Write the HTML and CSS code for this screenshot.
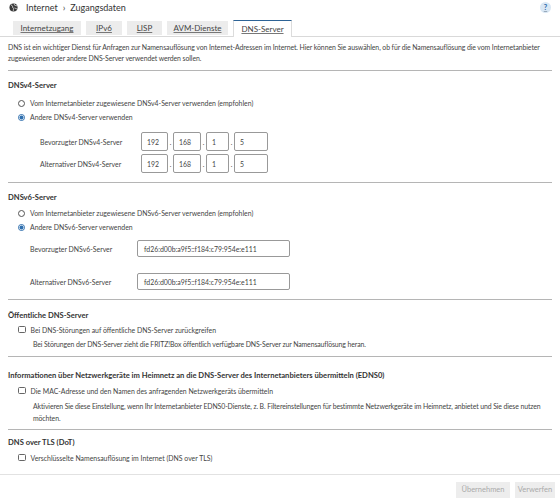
FILE: index.html
```html
<!DOCTYPE html>
<html lang="de">
<head>
<meta charset="utf-8">
<title>Zugangsdaten</title>
<link rel="stylesheet" href="styles.css">
</head>
<body>
<header class="top">
  <div class="crumbs">
    <svg class="globe" width="9" height="9" viewBox="0 0 20 20" aria-hidden="true">
      <circle cx="10" cy="10" r="9" fill="#3a3a3a"/>
      <path d="M5 4.5c1.5 1 2.5 1 3 2.5s-1 2 0 3 2.5.5 2.5 2-1.5 2.5-1 4.5M12 3c-.5 1.5.5 2.5 2 2.5s2 1.5 3 1M13.5 11c1 .5 1.5 2 3 2" fill="none" stroke="#fff" stroke-width="1.6" stroke-linecap="round"/>
    </svg>
    <span class="crumb">Internet</span>
    <span class="chev">›</span>
    <span class="crumb">Zugangsdaten</span>
  </div>
  <span class="help">?</span>
</header>

<nav class="tabs">
  <a class="tab t1">Internetzugang</a>
  <a class="tab t2">IPv6</a>
  <a class="tab t3">LISP</a>
  <a class="tab t4">AVM-Dienste</a>
  <a class="tab t5 active">DNS-Server</a>
</nav>

<main class="content">
  <p class="desc">DNS ist ein wichtiger Dienst für Anfragen zur Namensauflösung von Internet-Adressen im Internet. Hier können Sie auswählen, ob für die Namensauflösung die vom Internetanbieter zugewiesenen oder andere DNS-Server verwendet werden sollen.</p>

  <section class="sec v4">
    <h3>DNSv4-Server</h3>
    <div class="opt first"><span class="radio"></span>Vom Internetanbieter zugewiesene DNSv4-Server verwenden (empfohlen)</div>
    <div class="opt"><span class="radio on"></span>Andere DNSv4-Server verwenden</div>
    <div class="iprow r1">
      <span class="lbl">Bevorzugter DNSv4-Server</span>
      <span class="box b1">192</span><span class="dot">.</span><span class="box b2">168</span><span class="dot">.</span><span class="box b3">1</span><span class="dot">.</span><span class="box b4">5</span>
    </div>
    <div class="iprow r2">
      <span class="lbl">Alternativer DNSv4-Server</span>
      <span class="box b1">192</span><span class="dot">.</span><span class="box b2">168</span><span class="dot">.</span><span class="box b3">1</span><span class="dot">.</span><span class="box b4">5</span>
    </div>
  </section>

  <section class="sec v6">
    <h3>DNSv6-Server</h3>
    <div class="opt first"><span class="radio"></span>Vom Internetanbieter zugewiesene DNSv6-Server verwenden (empfohlen)</div>
    <div class="opt"><span class="radio on"></span>Andere DNSv6-Server verwenden</div>
    <div class="v6row r1">
      <span class="lbl">Bevorzugter DNSv6-Server</span>
      <span class="wide">fd26:d00b:a9f5::f184:c79:954e:e111</span>
    </div>
    <div class="v6row r2">
      <span class="lbl">Alternativer DNSv6-Server</span>
      <span class="wide">fd26:d00b:a9f5::f184:c79:954e:e111</span>
    </div>
  </section>

  <section class="sec pub">
    <h3>Öffentliche DNS-Server</h3>
    <div class="opt first"><span class="check"></span>Bei DNS-Störungen auf öffentliche DNS-Server zurückgreifen</div>
    <p class="hint">Bei Störungen der DNS-Server zieht die FRITZ!Box öffentlich verfügbare DNS-Server zur Namensauflösung heran.</p>
  </section>

  <section class="sec edns">
    <h3>Informationen über Netzwerkgeräte im Heimnetz an die DNS-Server des Internetanbieters übermitteln (EDNS0)</h3>
    <div class="opt first"><span class="check"></span>Die MAC-Adresse und den Namen des anfragenden Netzwerkgeräts übermitteln</div>
    <p class="hint">Aktivieren Sie diese Einstellung, wenn Ihr Internetanbieter EDNS0-Dienste, z. B. Filtereinstellungen für bestimmte Netzwerkgeräte im Heimnetz, anbietet und Sie diese nutzen möchten.</p>
  </section>

  <section class="sec dot-sec">
    <h3>DNS over TLS (DoT)</h3>
    <div class="opt first"><span class="check"></span>Verschlüsselte Namensauflösung im Internet (DNS over TLS)</div>
  </section>
</main>

<footer class="actions">
  <button class="btn b-apply" disabled>Übernehmen</button>
  <button class="btn b-discard" disabled>Verwerfen</button>
</footer>
</body>
</html>
```

FILE: styles.css
```css
* { box-sizing: border-box; }
html, body { margin: 0; padding: 0; background: #fff; }
body {
  width: 560px;
  height: 500px;
  overflow: hidden;
  font-family: Lato, "Liberation Sans", sans-serif;
  font-size: 6.9px;
  color: #444;
}

.top {
  height: 14px;
  display: flex;
  align-items: center;
  justify-content: space-between;
  padding: 0 9px 0 9px;
}
.crumbs {
  display: flex;
  align-items: center;
  font-size: 9px;
  color: #333;
}
.globe { margin-right: 8px; }
.chev { margin: 0 5px; font-size: 9.5px; color: #444; }
.help {
  width: 11px;
  height: 11px;
  border-radius: 50%;
  background: #d9e7f4;
  color: #2b6aa8;
  font-weight: bold;
  font-size: 7.5px;
  display: flex;
  align-items: center;
  justify-content: center;
  text-decoration: underline;
  text-decoration-color: #9ab;
}

.tabs {
  display: flex;
  align-items: flex-end;
  gap: 5px;
  margin-top: 6px;
  height: 17px;
  padding-left: 13px;
  border-bottom: 1px solid #d9d9d9;
}
.tab {
  height: 14px;
  margin-bottom: 1px;
  display: flex;
  align-items: center;
  justify-content: center;
  background: #ececec;
  color: #444;
  font-size: 8px;
  text-decoration: underline;
  text-decoration-color: #777;
}
.t1 { width: 68px; }
.t2 { width: 36px; }
.t3 { width: 35px; }
.t4 { width: 61px; }
.t5 { width: 59px; }
.tab.active {
  height: 17px;
  margin-bottom: -1px;
  background: #fff;
  border-top: 1.5px solid #2d6396;
  border-left: 1px solid #dcdcdc;
  border-right: 1px solid #dcdcdc;
  padding-bottom: 1px;
}

.content { padding: 0 8px; }

.desc {
  margin: 5px 0 0;
  padding-bottom: 6px;
  line-height: 11px;
  font-size: 6.9px;
  letter-spacing: -0.08px;
  border-bottom: 1.5px solid #b5b5b5;
}

.sec {
  border-bottom: 1.5px solid #b5b5b5;
}
.sec h3 {
  margin: 0;
  font-size: 7.6px;
  line-height: 12px;
  font-weight: bold;
  color: #333;
}

.opt {
  display: flex;
  align-items: center;
  height: 14px;
  padding-left: 10px;
}
.radio {
  width: 7px;
  height: 7px;
  border-radius: 50%;
  border: 1px solid #555;
  margin-right: 5px;
  flex: none;
}
.radio.on {
  border-color: #2f6fae;
  background: radial-gradient(circle, #2f6fae 0 1.8px, #fff 2.2px);
}
.check {
  width: 7.5px;
  height: 7.5px;
  border: 1px solid #666;
  border-radius: 1.5px;
  margin-right: 5px;
  flex: none;
}

.iprow, .v6row {
  display: flex;
  align-items: center;
}
.iprow .lbl { width: 133px; padding-left: 32px; }
.v6row .lbl { width: 129px; padding-left: 22px; }

.box, .wide {
  height: 19px;
  border: 1px solid #999;
  border-radius: 2px;
  display: flex;
  align-items: center;
  padding-left: 5px;
  color: #444;
}
.b1 { width: 27px; }
.b2 { width: 28px; }
.b3 { width: 23px; }
.b4 { width: 34px; }
.dot { width: 5px; text-align: center; }
.wide { width: 153px; height: 17px; padding-left: 6px; }

.hint {
  margin: 1px 0 0;
  padding-left: 25px;
  line-height: 12px;
  letter-spacing: -0.1px;
}

/* section spacing */
.v4 { padding: 8px 0 9px; }
.v4 .first { margin-top: 5px; }
.v4 .r1 { margin-top: 8px; }
.v4 .r2 { margin-top: 3px; }

.v6 { padding: 8px 0 8.5px; }
.v6 .first { margin-top: 3px; }
.v6 .r1 { margin-top: 6px; }
.v6 .r2 { margin-top: 16px; }

.pub { padding: 9px 0 6px; }
.pub .first { margin-top: 2px; }

.edns { padding: 12px 0 5px; }
.edns .first { margin-top: 3px; }
.edns .hint { margin-top: 2px; }

.dot-sec { padding: 6px 0 9.5px; border-bottom: none; }
.dot-sec .first { margin-top: 3px; }

.actions {
  border-top: 1px solid #e2e2e2;
  display: flex;
  justify-content: flex-end;
  gap: 5px;
  padding: 6.5px 5px 0 0;
}
.btn {
  height: 16px;
  border: none;
  background: #ededed;
  color: #aaa;
  font-family: Lato, "Liberation Sans", sans-serif;
  font-size: 7.5px;
  padding: 0;
}
.b-apply { width: 54px; }
.b-discard { width: 40px; }
```
